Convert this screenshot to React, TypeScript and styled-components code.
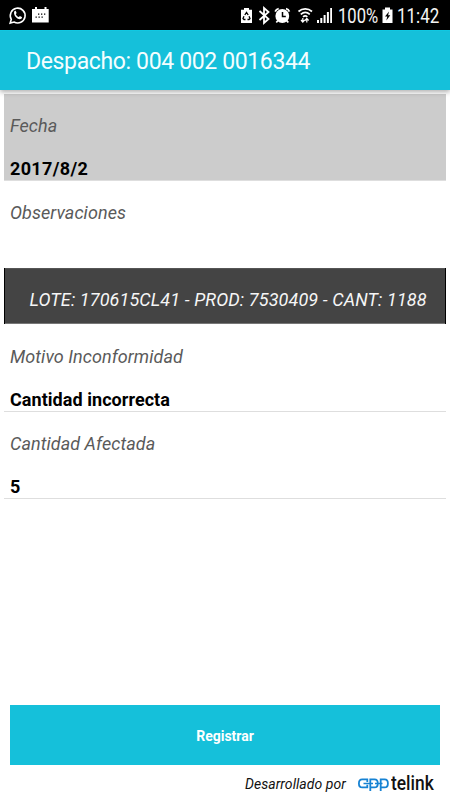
import React from 'react';
import styled, { createGlobalStyle } from 'styled-components';

const GlobalStyle = createGlobalStyle`
  * { box-sizing: border-box; }
  body { margin: 0; background: #fff; font-family: Roboto, "Liberation Sans", sans-serif; }
`;

const Screen = styled.div`
  width: 450px;
  height: 800px;
  display: flex;
  flex-direction: column;
  overflow: hidden;
  background: #fff;
`;

const StatusBar = styled.div`
  height: 30px;
  flex: none;
  background: #000;
  display: flex;
  justify-content: space-between;
  svg { display: block; flex: none; }
`;

const StatusGroup = styled.div`
  display: flex;
`;

const StatusText = styled.span<{ $width: number; $scale: number }>`
  width: ${p => p.$width}px;
  flex: none;
  color: #f4f4f4;
  font-size: 20px;
  line-height: 33px;
  white-space: nowrap;
  transform: scaleX(${p => p.$scale});
  transform-origin: left;
`;

const AppBar = styled.header`
  height: 60px;
  flex: none;
  padding-left: 26px;
  background: #15c0da;
  border-top: 1px solid #10c8e2;
  box-shadow: 0 2px 5px rgba(0, 0, 0, 0.32);
  z-index: 1;
`;

const Title = styled.h1`
  margin: 0;
  font-size: 23px;
  font-weight: 400;
  line-height: 61px;
  letter-spacing: -0.36px;
  color: #f4feff;
  white-space: nowrap;
`;

const Form = styled.main`
  flex: 1;
  padding: 4px 4px 0;
`;

const Field = styled.div<{ $height: number; $shaded?: boolean; $line?: boolean; $top?: number }>`
  height: ${p => p.$height}px;
  padding: ${p => p.$top ?? 20}px 6px 0;
  background: ${p => (p.$shaded ? '#ccc' : 'transparent')};
  border-bottom: 1px solid ${p => (p.$line ? '#dedede' : 'transparent')};
`;

const Label = styled.div`
  height: 43px;
  font-size: 18px;
  font-style: italic;
  font-weight: 400;
  line-height: 24px;
  letter-spacing: 0.06px;
  color: #5a5a5a;
`;

const Value = styled.div<{ $spacing?: number }>`
  font-size: 18px;
  font-weight: 700;
  line-height: 24px;
  letter-spacing: ${p => p.$spacing ?? 0}px;
  color: #000;
`;

const Lot = styled.div`
  height: 56px;
  padding: 4px 0 0 24.5px;
  background: #444;
  border: solid #000;
  border-width: 0 1px;
  box-shadow: inset 0 -1px #777, inset 0 1px #555;
  color: #f6f6f6;
  font-size: 18px;
  font-style: italic;
  line-height: 56px;
  letter-spacing: 0.11px;
  white-space: nowrap;
`;

const Register = styled.button`
  height: 60px;
  flex: none;
  margin: 0 10px;
  padding: 1px 0 0;
  border: 0;
  background: #15c0da;
  color: #fff;
  font: 700 14px/60px Roboto, sans-serif;
`;

const Footer = styled.footer`
  height: 35px;
  flex: none;
  display: flex;
  padding-left: 245px;
`;

const Credit = styled.span`
  width: 110px;
  font-size: 14px;
  font-style: italic;
  line-height: 39px;
  letter-spacing: 0.05px;
  white-space: nowrap;
  color: #111;
`;

const Brand = styled.span`
  display: flex;
  color: #111;
  font-size: 20px;
  font-weight: 500;
  line-height: 37px;
  svg { display: block; flex: none; }
`;

const BrandText = styled.span`
  transform: scaleX(0.87);
  transform-origin: left;
`;

const NotificationIcons = () => (
  <svg width="60" height="30" viewBox="0 0 60 30" fill="none">
    <path d="M10.2 23 11.3 19.3A7.4 7.4 0 1 1 14 22Z" stroke="#fff" strokeWidth="1.6" />
    <path d="M14.4 11.2c.5-.5 1.3-.4 1.5.1l.7 1.8-.8 1.1c.7 1.5 1.6 2.3 3.1 2.9l1-1.1 1.9 1c.4.3.2 1.2-.5 1.7-3.1 2.1-8.8-3.7-6.9-7.5Z" fill="#fff" />
    <path d="M32 9h16.7v13.5H32zM35 7h2v3h-2zM44.5 7h2v3h-2z" fill="#fff" />
    <path d="M38 13.5h1.3v1.3H38zm3 0h1.3v1.3H41zm3 0h1.3v1.3H44zM35.5 16.5h1.3v1.3h-1.3zm3 0h1.3v1.3h-1.3zm3 0h1.3v1.3h-1.3z" fill="#000" />
  </svg>
);

const SystemIcons = () => (
  <svg width="105" height="30" viewBox="233 0 105 30" fill="none">
    <path d="M244 8h5v1.7h3V23h-11V9.7h3z" fill="#fff" />
    <path d="m244.8 15 1.7-2.5 1.7 2.5m.8 1.2 1 2.3-1 1h-1.5m-2 0h-1.5l-1-1 1-2.3" stroke="#000" strokeWidth="1.3" />
    <path d="m259.5 11 9 8-4.5 4V8l4.5 4-9 8" stroke="#fff" strokeWidth="1.8" />
    <circle cx="282.3" cy="16" r="6.9" fill="#fff" />
    <path d="M275.2 11.6a4.5 4.5 0 0 1 3.5-3M286 8.6a4.5 4.5 0 0 1 3.4 3M278 20.5l-1.7 2m10.3-2 1.7 2" stroke="#fff" strokeWidth="1.8" />
    <path d="M282.5 12v4.5h3.3" stroke="#000" strokeWidth="1.5" />
    <path d="M298.5 11.5c4-3.6 9.5-3.6 13.5 0m-11.2 2.8c2.8-2.4 6.2-2.4 9 0m-6.8 2.5c1.4-1.1 3-1.1 4.4 0" stroke="#fff" strokeWidth="1.7" />
    <path d="M302.8 18v4m-1.8-2 1.8 2 1.8-2m2.2 2.5v-4m-1.8 2 1.8-2 1.8 2" stroke="#fff" strokeWidth="1.2" />
    <path d="M317 20h2v3h-2zm3.3-2h2v5h-2zm3.3-3h2v8h-2zm3.3-3h2v11h-2zm3.3-4h1.8v15h-1.8z" fill="#fff" />
  </svg>
);

const BatteryIcon = () => (
  <svg width="16" height="30" viewBox="0 0 16 30">
    <path d="M4 7.5h5v2h2.5v13.5h-10V9.5H4z" fill="#fff" />
    <path d="M8 11.5 4 16.5h2.3l-1 4 4-5.3H7.1z" fill="#000" />
  </svg>
);

const LinkedLetters = () => (
  <svg width="36" height="35" viewBox="355 765 36 35" fill="none" stroke="#1682d3" strokeWidth="1.8">
    <path d="M367.3 782v-2.6h-5c-2.3 0-3.4 1.5-3.4 4s1.1 4 3.4 4h5v-2.6" />
    <path d="M370.3 791v-11.6h4.2c2.3 0 3.3 1.5 3.3 4s-1 4-3.3 4h-4.2" />
    <path d="M380.7 791v-11.6h3.9c2.3 0 3.3 1.5 3.3 4s-1 4-3.3 4h-3.9" />
    <path d="M363.5 783.4h9.5M375 783.4h7.5" strokeWidth="1.5" />
  </svg>
);

export default function App() {
  return (
    <>
      <GlobalStyle />
      <Screen>
        <StatusBar>
          <NotificationIcons />
          <StatusGroup>
            <SystemIcons />
            <StatusText $width={43} $scale={0.83}>100%</StatusText>
            <BatteryIcon />
            <StatusText $width={53} $scale={0.85}>11:42</StatusText>
          </StatusGroup>
        </StatusBar>
        <AppBar><Title>Despacho: 004 002 0016344</Title></AppBar>
        <Form>
          <Field $height={87} $shaded $line>
            <Label>Fecha</Label>
            <Value $spacing={0.35}>2017/8/2</Value>
          </Field>
          <Field $height={87}>
            <Label>Observaciones</Label>
          </Field>
          <Lot>LOTE: 170615CL41 - PROD: 7530409 - CANT: 1188</Lot>
          <Field $height={88} $line $top={21}>
            <Label>Motivo Inconformidad</Label>
            <Value $spacing={0.05}>Cantidad incorrecta</Value>
          </Field>
          <Field $height={87} $line>
            <Label>Cantidad Afectada</Label>
            <Value>5</Value>
          </Field>
        </Form>
        <Register>Registrar</Register>
        <Footer>
          <Credit>Desarrollado por</Credit>
          <Brand><LinkedLetters /><BrandText>telink</BrandText></Brand>
        </Footer>
      </Screen>
    </>
  );
}
